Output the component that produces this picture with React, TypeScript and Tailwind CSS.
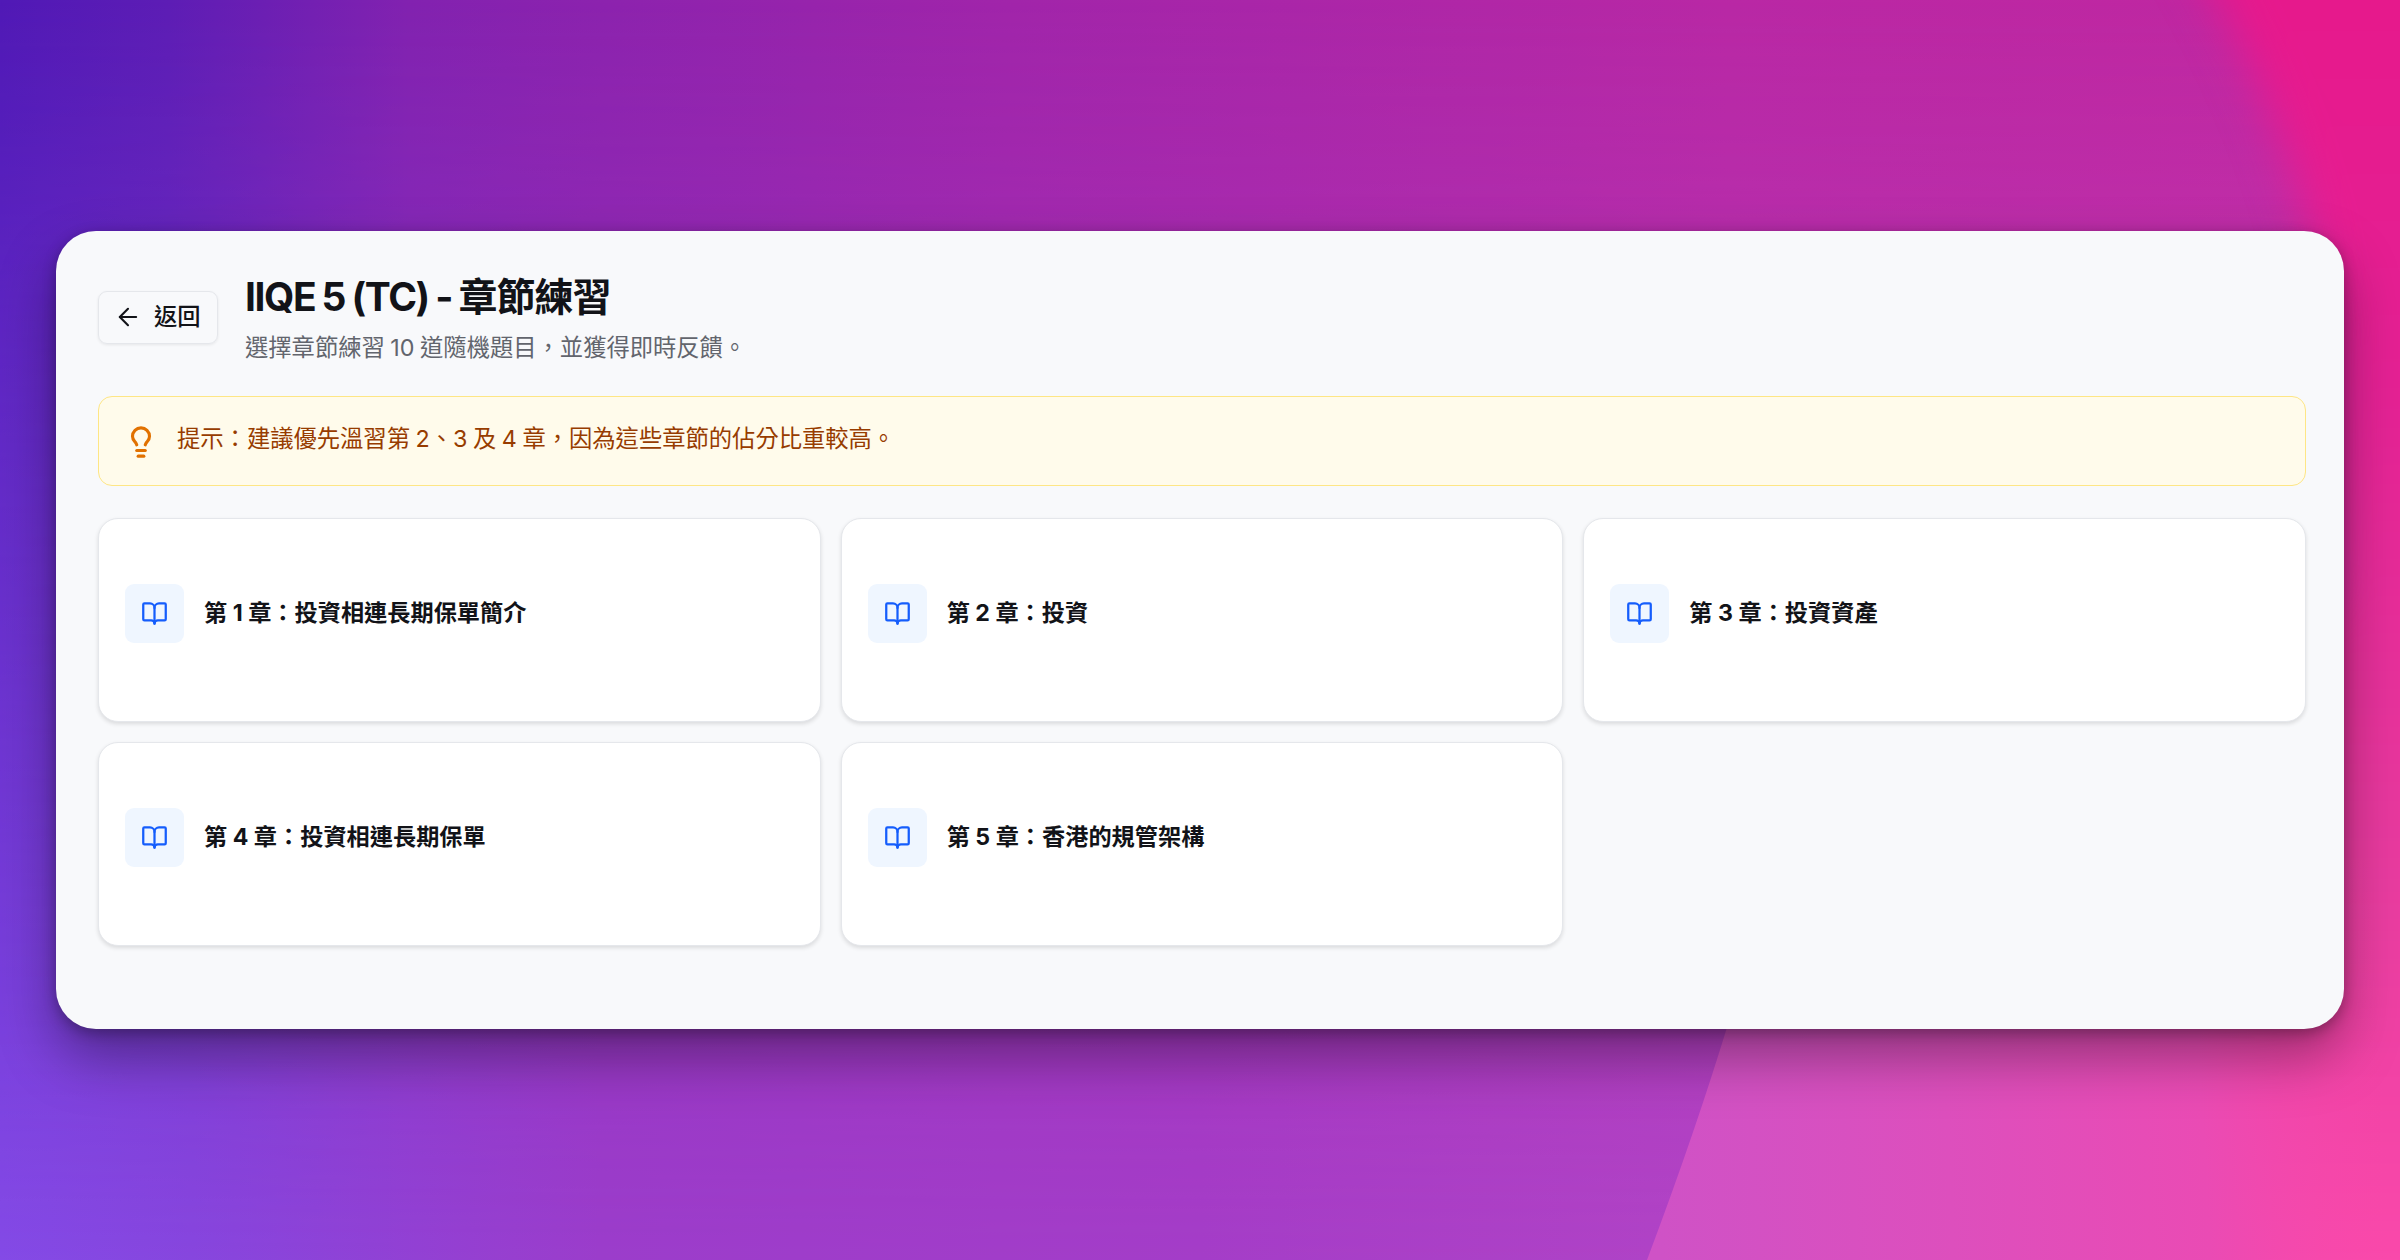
import { ArrowLeft, BookOpen, Lightbulb } from 'lucide-react'

const chapters = [
  '第 1 章：投資相連長期保單簡介',
  '第 2 章：投資',
  '第 3 章：投資資產',
  '第 4 章：投資相連長期保單',
  '第 5 章：香港的規管架構',
]

function Backdrop() {
  return (
    <svg className="absolute inset-0 h-full w-full" viewBox="0 0 2400 1260" preserveAspectRatio="none" aria-hidden="true">
      <defs>
        <linearGradient id="top" x1="0" x2="1" y1="0" y2="0">
          <stop offset="0" stopColor="#5019b6" />
          <stop offset="0.07" stopColor="#5d1db5" />
          <stop offset="0.17" stopColor="#8222b0" />
          <stop offset="0.42" stopColor="#a125aa" />
          <stop offset="0.72" stopColor="#b928a5" />
          <stop offset="1" stopColor="#c227a0" />
        </linearGradient>
        <linearGradient id="bottom" x1="0" x2="1" y1="0" y2="0">
          <stop offset="0" stopColor="#844ae6" />
          <stop offset="0.08" stopColor="#8746de" />
          <stop offset="0.25" stopColor="#9b3dcb" />
          <stop offset="0.5" stopColor="#a43dc8" />
          <stop offset="0.72" stopColor="#b144c6" />
          <stop offset="1" stopColor="#c04ac4" />
        </linearGradient>
        <linearGradient id="fade" x1="0" x2="0" y1="0" y2="1">
          <stop offset="0" stopColor="#000" />
          <stop offset="1" stopColor="#fff" />
        </linearGradient>
        <mask id="down">
          <rect width="2400" height="1260" fill="url(#fade)" />
        </mask>
        <linearGradient id="pink" x1="0" x2="0" y1="0" y2="1260" gradientUnits="userSpaceOnUse">
          <stop offset="0" stopColor="#e6198c" />
          <stop offset="0.3" stopColor="#e52194" />
          <stop offset="0.7" stopColor="#e93ca0" />
          <stop offset="1" stopColor="#fa49ab" />
        </linearGradient>
        <linearGradient id="orchid" x1="1660" x2="2390" y1="1240" y2="1200" gradientUnits="userSpaceOnUse">
          <stop offset="0" stopColor="#cf52c6" />
          <stop offset="0.4" stopColor="#dd4fbd" />
          <stop offset="0.75" stopColor="#ea4bb4" />
          <stop offset="1" stopColor="#f748aa" stopOpacity="0" />
        </linearGradient>
        <filter id="soft" x="-50%" y="-20%" width="200%" height="140%" colorInterpolationFilters="sRGB">
          <feGaussianBlur stdDeviation="22" />
        </filter>
      </defs>
      <rect width="2400" height="1260" fill="url(#top)" />
      <rect width="2400" height="1260" fill="url(#bottom)" mask="url(#down)" />
      <path d="M2160 -100 C2220 0 2305 150 2328 330 L2328 600 L2000 800 V1400 H2600 V-100 Z" fill="url(#pink)" filter="url(#soft)" />
      <path d="M1773 860 Q1730 1040 1647 1260 H2400 V860 Z" fill="url(#orchid)" />
    </svg>
  )
}

function ChapterCard({ title }: { title: string }) {
  return (
    <article className="flex h-[204px] items-center gap-5 rounded-[20px] border border-[#e5e7eb] bg-white px-[26px] pb-[13px] shadow-[0_2px_4px_rgba(0,0,0,0.12)]">
      <div className="flex size-[59px] items-center justify-center rounded-[9px] bg-[#eff6ff]">
        <BookOpen className="size-[27px] text-[#155dfc]" strokeWidth={2} />
      </div>
      <h3 className="pb-px text-[23.2px] leading-8 font-bold text-[#121318]">{title}</h3>
    </article>
  )
}

export default function App() {
  return (
    <div
      lang="zh-Hant-TW"
      className="relative flex h-[1260px] w-[2400px] items-center justify-center overflow-hidden font-[Inter,'Noto_Sans_CJK_TC',sans-serif]"
    >
      <Backdrop />
      <main className="relative h-[798px] w-[2288px] rounded-[40px] bg-[#f8f9fb] pt-[42px] pr-[38px] pl-[42px] shadow-[0_28px_56px_rgba(0,0,0,0.36),0_4px_14px_rgba(0,0,0,0.28)]">
        <header className="flex h-[88px] items-center gap-[27px]">
          <button className="flex h-[53px] w-[120px] items-center gap-[12px] rounded-[9px] border border-[#e5e7eb] pl-[15px] text-[23.3px] font-medium text-[#121318] shadow-[0_1px_3px_rgba(0,0,0,0.08)]">
            <ArrowLeft className="size-7 shrink-0" strokeWidth={1.8} />
            <span className="pt-px">返回</span>
          </button>
          <div className="pt-[2px]">
            <h1 className="text-[39px] leading-[52px] font-bold tracking-[-0.025em] text-[#121318] [word-spacing:-1.5px]">
              <span className="tracking-[-0.036em]">IIQE 5 (TC) - </span>章節練習
            </h1>
            <p className="mt-[7px] text-[23.3px] leading-[36px] text-[#62656d] [word-spacing:-1px]">選擇章節練習 10 道隨機題目，並獲得即時反饋。</p>
          </div>
        </header>

        <div className="mt-[35px] flex h-[90px] items-start gap-[19px] rounded-[14px] border border-[#fee685] bg-[#fffbeb] pt-[25px] pl-[25px]">
          <Lightbulb className="mt-[3px] size-[34px] text-[#e17100]" strokeWidth={2.2} />
          <p className="text-[23.3px] leading-[34px] text-[#973c00] [word-spacing:-1px]">提示：建議優先溫習第 2、3 及 4 章，因為這些章節的佔分比重較高。</p>
        </div>

        <section className="mt-8 grid grid-cols-3 gap-5">
          {chapters.map((title) => (
            <ChapterCard key={title} title={title} />
          ))}
        </section>
      </main>
    </div>
  )
}
